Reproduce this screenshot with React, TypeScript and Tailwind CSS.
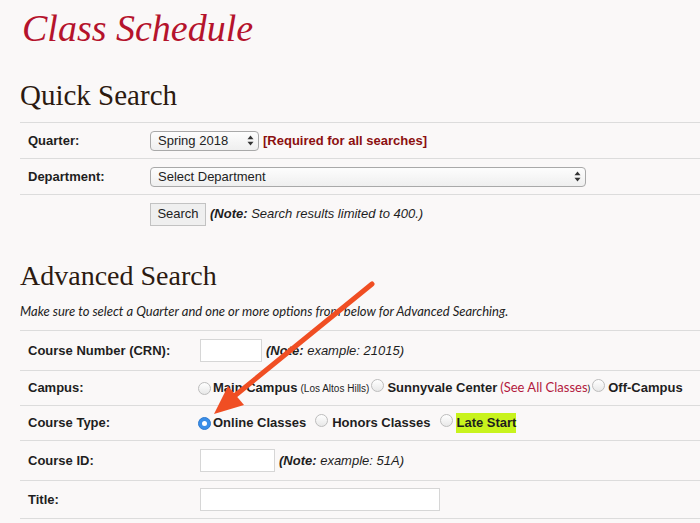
import React from "react";

const sans = { fontFamily: '"Liberation Sans", Arial, sans-serif' };
const serif = { fontFamily: '"Liberation Serif", "Times New Roman", serif' };
const lato = { fontFamily: 'Lato, "Liberation Sans", sans-serif' };

function Radio({ checked = false }: { checked?: boolean }) {
  if (checked) {
    return (
      <span className="inline-flex h-[13px] w-[13px] shrink-0 items-center justify-center rounded-full bg-[#3a8ee8] border border-[#2f7bd0]">
        <span className="h-[5px] w-[5px] rounded-full bg-white" />
      </span>
    );
  }
  return (
    <span className="inline-block h-[13px] w-[13px] shrink-0 rounded-full border border-[#bdbdbd] bg-gradient-to-b from-white to-[#e8e8e8]" />
  );
}

function Updown() {
  return (
    <svg width="7" height="11" viewBox="0 0 7 11" className="shrink-0">
      <path d="M3.5 0.5 L6.5 4.2 L0.5 4.2 Z" fill="#333" />
      <path d="M3.5 10.5 L6.5 6.8 L0.5 6.8 Z" fill="#333" />
    </svg>
  );
}

function Select({ text, width }: { text: string; width: string }) {
  return (
    <div
      className={`flex h-[20px] ${width} items-center justify-between rounded-[4px] border border-[#a9a9a9] bg-gradient-to-b from-[#fdfdfd] to-[#efefef] pl-[7px] pr-[4px] text-[13px] text-[#222]`}
    >
      <span>{text}</span>
      <Updown />
    </div>
  );
}

function Row({
  label,
  h,
  col,
  last = false,
  children,
}: {
  label: string;
  h: string;
  col: string;
  last?: boolean;
  children?: React.ReactNode;
}) {
  return (
    <div className={`flex ${h} items-center ${last ? "" : "border-b border-[#dcdcdc]"}`}>
      <div className={`${col} shrink-0 pl-2 text-[13px] font-bold text-[#1e1e1e]`}>{label}</div>
      <div className="flex items-center text-[13px] text-[#1e1e1e]">{children}</div>
    </div>
  );
}

export default function App() {
  return (
    <div className="relative h-[523px] w-[700px] overflow-hidden bg-[#faf8f8]" style={sans}>
      <div className="pl-5">
        <h1
          className="pt-[6px] pl-[2px] text-[38px] italic leading-[44px] text-[#b5132c]"
          style={serif}
        >
          Class Schedule
        </h1>

        <h2 className="mt-[28px] text-[29px] leading-[34px] text-[#2c1a10]" style={serif}>
          Quick Search
        </h2>

        <div className="mt-[10px] border-t border-[#dcdcdc]">
          <Row label="Quarter:" h="h-[36px]" col="w-[130px]">
            <Select text="Spring 2018" width="w-[109px]" />
            <span className="ml-[4px] font-bold text-[#8c1010]">[Required for all searches]</span>
          </Row>
          <Row label="Department:" h="h-[36px]" col="w-[130px]">
            <Select text="Select Department" width="w-[436px]" />
          </Row>
          <Row label="" h="h-[38px]" col="w-[130px]" last>
            <button className="h-[23px] w-[56px] border border-[#c2c2c2] bg-[#efefef] text-[13px] text-[#222]">
              Search
            </button>
            <span className="ml-[4px] italic">
              <b>(Note:</b> Search results limited to 400.)
            </span>
          </Row>
        </div>

        <h2 className="mt-[26px] text-[28px] leading-[34px] text-[#2c1a10]" style={serif}>
          Advanced Search
        </h2>
        <p className="mt-[9px] text-[13px] italic leading-[18px] text-[#222]" style={lato}>
          Make sure to select a Quarter and one or more options from below for Advanced Searching.
        </p>

        <div className="mt-[10px] border-t border-[#dcdcdc]">
          <Row label="Course Number (CRN):" h="h-[40px]" col="w-[180px]">
            <span className="h-[23px] w-[62px] border border-[#d6d6d6] bg-white" />
            <span className="ml-[4px] italic">
              <b>(Note:</b> example: 21015)
            </span>
          </Row>
          <Row label="Campus:" h="h-[35px]" col="w-[178px]">
            <Radio />
            <span className="ml-[2px] font-bold">Main Campus</span>
            <span className="ml-[3px] text-[10px]">(Los Altos Hills)</span>
            <span className="ml-[2px]">
              <Radio />
            </span>
            <span className="ml-[3px] font-bold">Sunnyvale Center</span>
            <span className="ml-[3px] text-[13px] text-[#b3183d]" style={lato}>
              (See All Classes<span className="text-[10px] text-[#222]">)</span>
            </span>
            <span className="ml-[2px]">
              <Radio />
            </span>
            <span className="ml-[3px] font-bold">Off-Campus</span>
          </Row>
          <Row label="Course Type:" h="h-[35px]" col="w-[178px]">
            <Radio checked />
            <span className="ml-[2px] font-bold">Online Classes</span>
            <span className="ml-[9px]">
              <Radio />
            </span>
            <span className="ml-[4px] font-bold">Honors Classes</span>
            <span className="ml-[10px]">
              <Radio />
            </span>
            <span className="ml-[3px] bg-[#c8f31d] font-bold">Late Start</span>
          </Row>
          <Row label="Course ID:" h="h-[40px]" col="w-[180px]">
            <span className="h-[23px] w-[75px] border border-[#d6d6d6] bg-white" />
            <span className="ml-[4px] italic">
              <b>(Note:</b> example: 51A)
            </span>
          </Row>
          <Row label="Title:" h="h-[38px]" col="w-[180px]">
            <span className="h-[23px] w-[240px] border border-[#d6d6d6] bg-white" />
          </Row>
        </div>
      </div>

      {/* annotation arrow */}
      <svg
        className="pointer-events-none absolute left-0 top-0"
        width="700"
        height="523"
        viewBox="0 0 700 523"
      >
        <line x1="372" y1="284" x2="232" y2="398" stroke="#f04e23" strokeWidth="5" strokeLinecap="round" />
        <polygon points="214,414 244,405 228,386" fill="#f04e23" />
      </svg>
    </div>
  );
}
